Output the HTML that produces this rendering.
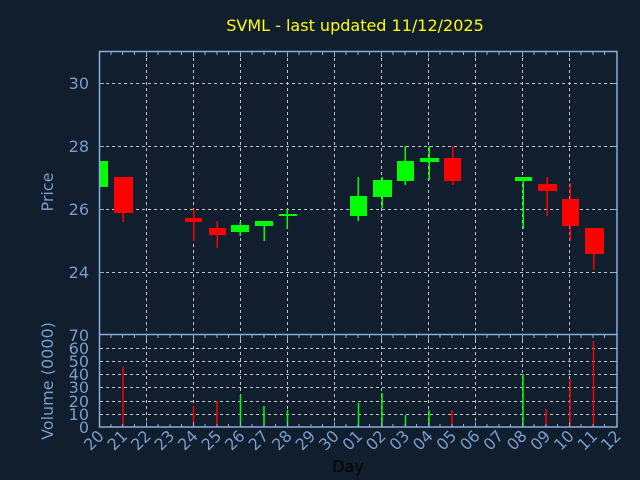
<!DOCTYPE html>
<html><head><meta charset="utf-8"><style>
html,body{margin:0;padding:0;background:#101e2e;width:640px;height:480px;overflow:hidden}
svg{display:block}
text{font-family:"DejaVu Sans","Liberation Sans",sans-serif}
</style></head><body>
<svg width="640" height="480" viewBox="0 0 640 480" xmlns="http://www.w3.org/2000/svg">
<rect width="640" height="480" fill="#101e2e"/>
<text x="355" y="31" fill="#ffff00" font-size="16" text-anchor="middle">SVML - last updated 11/12/2025</text>
<g stroke="#c0c4c8" stroke-width="1" stroke-dasharray="3,3" fill="none">
<path d="M146.5 52V427M193.5 52V427M240.5 52V427M287.5 52V427M334.5 52V427M381.5 52V427M428.5 52V427M475.5 52V427M522.5 52V427M569.5 52V427"/>
<path d="M100 83.5H617M100 146.5H617M100 209.5H617M100 272.5H617"/>
<path d="M100 348.5H617M100 361.5H617M100 374.5H617M100 387.5H617M100 401.5H617M100 414.5H617"/>
</g>
<g fill="#00ff00">
<rect x="99" y="161" width="9" height="26"/>
<rect x="231" y="225" width="18" height="7"/><rect x="239.5" y="222" width="1.5" height="14"/>
<rect x="255" y="221" width="18" height="5"/><rect x="263.5" y="221" width="1.5" height="20"/>
<rect x="279" y="214" width="18" height="2"/><rect x="286.5" y="209" width="1.5" height="20"/>
<rect x="350" y="196" width="17" height="20"/><rect x="357.5" y="177" width="1.5" height="44"/>
<rect x="373" y="180" width="19" height="17"/><rect x="381.5" y="177" width="1.5" height="31"/>
<rect x="397" y="161" width="17" height="20"/><rect x="404.5" y="146" width="1.5" height="39"/>
<rect x="420" y="158" width="19" height="4"/><rect x="428.5" y="146" width="1.5" height="34"/>
<rect x="515" y="177" width="17" height="4"/><rect x="522.5" y="177" width="1.5" height="52"/>
</g>
<g fill="#ff0000">
<rect x="114" y="177" width="19" height="36"/><rect x="122.5" y="177" width="1.5" height="45"/>
<rect x="185" y="218" width="17" height="4"/><rect x="193" y="209" width="1.5" height="32"/>
<rect x="209" y="228" width="17" height="7"/><rect x="216.5" y="221" width="1.5" height="27"/>
<rect x="444" y="158" width="17" height="23"/><rect x="452" y="146" width="1.5" height="39"/>
<rect x="538" y="184" width="19" height="7"/><rect x="546.5" y="177" width="1.5" height="39"/>
<rect x="562" y="199" width="17" height="27"/><rect x="569.5" y="183" width="1.5" height="58"/>
<rect x="585" y="228" width="19" height="26"/><rect x="593" y="228" width="1.5" height="42"/>
</g>
<g stroke-width="1.5">
<path stroke="#ff0000" d="M123 367V427M193.5 406V427M217 401V427M452 410V427M546 409V427M570 379V427M593.5 341V427"/>
<path stroke="#00ff00" d="M240.5 395V427M264 406V427M287.5 410V427M358.5 403V427M382 393V427M405.5 415V427M429 410V427M523 374V427"/>
</g>
<g stroke="#8aaedc" stroke-width="1.5" fill="none">
<rect x="99.5" y="51.5" width="517.5" height="375.5"/>
<path d="M99.5 334.5H617"/>
</g>
<g stroke="#8aaedc" stroke-width="1">
<path d="M111 52v3M122.5 52v3M134.5 52v3M146.5 52v5M158 52v3M170 52v3M181.5 52v3M193.5 52v5M205 52v3M217 52v3M228.5 52v3M240.5 52v5M252 52v3M264 52v3M275.5 52v3M287.5 52v5M299 52v3M311 52v3M322.5 52v3M334.5 52v5M346 52v3M358 52v3M369.5 52v3M381.5 52v5M393 52v3M405 52v3M416.5 52v3M428.5 52v5M440 52v3M452 52v3M463.5 52v3M475.5 52v5M487 52v3M499 52v3M510.5 52v3M522.5 52v5M534 52v3M546 52v3M557.5 52v3M569.5 52v5M581 52v3M593 52v3M604.5 52v3"/>
<path d="M111 335v3M122.5 335v3M134.5 335v3M146.5 335v5M158 335v3M170 335v3M181.5 335v3M193.5 335v5M205 335v3M217 335v3M228.5 335v3M240.5 335v5M252 335v3M264 335v3M275.5 335v3M287.5 335v5M299 335v3M311 335v3M322.5 335v3M334.5 335v5M346 335v3M358 335v3M369.5 335v3M381.5 335v5M393 335v3M405 335v3M416.5 335v3M428.5 335v5M440 335v3M452 335v3M463.5 335v3M475.5 335v5M487 335v3M499 335v3M510.5 335v3M522.5 335v5M534 335v3M546 335v3M557.5 335v3M569.5 335v5M581 335v3M593 335v3M604.5 335v3"/>
<path d="M111 427v-3M122.5 427v-3M134.5 427v-3M146.5 427v-5M158 427v-3M170 427v-3M181.5 427v-3M193.5 427v-5M205 427v-3M217 427v-3M228.5 427v-3M240.5 427v-5M252 427v-3M264 427v-3M275.5 427v-3M287.5 427v-5M299 427v-3M311 427v-3M322.5 427v-3M334.5 427v-5M346 427v-3M358 427v-3M369.5 427v-3M381.5 427v-5M393 427v-3M405 427v-3M416.5 427v-3M428.5 427v-5M440 427v-3M452 427v-3M463.5 427v-3M475.5 427v-5M487 427v-3M499 427v-3M510.5 427v-3M522.5 427v-5M534 427v-3M546 427v-3M557.5 427v-3M569.5 427v-5M581 427v-3M593 427v-3M604.5 427v-3"/>
<path d="M612 83.5h5M612 146.5h5M612 209.5h5M612 272.5h5M612 348.5h5M612 361.5h5M612 374.5h5M612 387.5h5M612 401.5h5M612 414.5h5M99 83.5h5M99 146.5h5M99 209.5h5M99 272.5h5"/>
</g>
<g fill="#7a9cc8" font-size="16" text-anchor="end">
<text x="89" y="89">30</text><text x="89" y="152">28</text><text x="89" y="215">26</text><text x="89" y="278">24</text>
<text x="89" y="341">70</text><text x="89" y="354">60</text><text x="89" y="367">50</text><text x="89" y="380">40</text><text x="89" y="393">30</text><text x="89" y="407">20</text><text x="89" y="420">10</text><text x="89" y="433">0</text>
</g>
<text transform="translate(53,192) rotate(-90)" fill="#7a9cc8" font-size="16" text-anchor="middle">Price</text>
<text transform="translate(53,381) rotate(-90)" fill="#7a9cc8" font-size="16" text-anchor="middle">Volume (0000)</text>
<g fill="#7a9cc8" font-size="16" text-anchor="end">
<text transform="translate(105,437) rotate(-45)">20</text>
<text transform="translate(128.5,437) rotate(-45)">21</text>
<text transform="translate(152,437) rotate(-45)">22</text>
<text transform="translate(175.5,437) rotate(-45)">23</text>
<text transform="translate(199,437) rotate(-45)">24</text>
<text transform="translate(222.5,437) rotate(-45)">25</text>
<text transform="translate(246,437) rotate(-45)">26</text>
<text transform="translate(269.5,437) rotate(-45)">27</text>
<text transform="translate(293,437) rotate(-45)">28</text>
<text transform="translate(316.5,437) rotate(-45)">29</text>
<text transform="translate(340,437) rotate(-45)">30</text>
<text transform="translate(363.5,437) rotate(-45)">01</text>
<text transform="translate(387,437) rotate(-45)">02</text>
<text transform="translate(410.5,437) rotate(-45)">03</text>
<text transform="translate(434,437) rotate(-45)">04</text>
<text transform="translate(457.5,437) rotate(-45)">05</text>
<text transform="translate(481,437) rotate(-45)">06</text>
<text transform="translate(504.5,437) rotate(-45)">07</text>
<text transform="translate(528,437) rotate(-45)">08</text>
<text transform="translate(551.5,437) rotate(-45)">09</text>
<text transform="translate(575,437) rotate(-45)">10</text>
<text transform="translate(598.5,437) rotate(-45)">11</text>
<text transform="translate(622,437) rotate(-45)">12</text>
</g>
<text x="348" y="472" fill="#000000" font-size="16" text-anchor="middle">Day</text>
</svg>
</body></html>
